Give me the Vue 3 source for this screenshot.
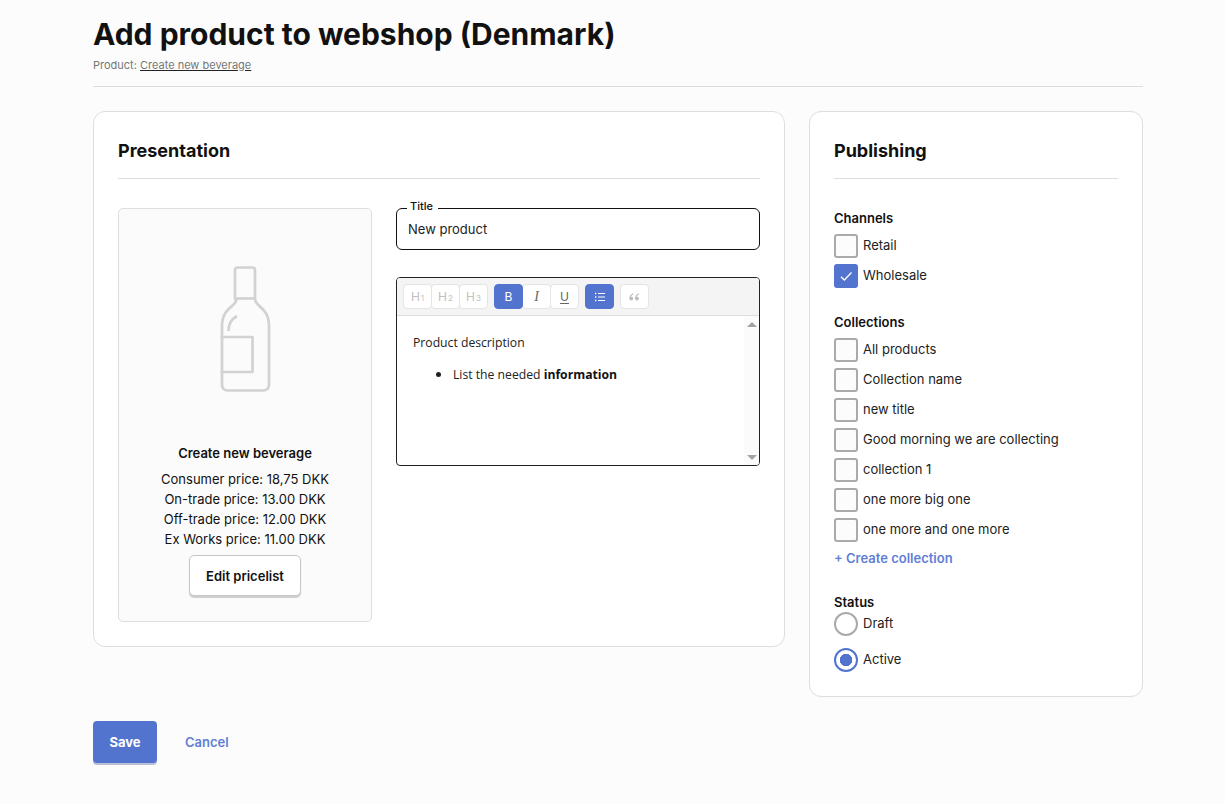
<script setup>
const prices = [
  'Consumer price: 18,75 DKK',
  'On-trade price: 13.00 DKK',
  'Off-trade price: 12.00 DKK',
  'Ex Works price: 11.00 DKK'
]
const channels = [
  { name: 'Retail', on: false },
  { name: 'Wholesale', on: true }
]
const collections = [
  'All products',
  'Collection name',
  'new title',
  'Good morning we are collecting',
  'collection 1',
  'one more big one',
  'one more and one more'
]
</script>

<template>
  <div class="page">
    <header class="head">
      <h1>Add product to webshop (Denmark)</h1>
      <p class="sub">Product: <a>Create new beverage</a></p>
    </header>

    <div class="cols">
      <section class="card main">
        <h2>Presentation</h2>
        <div class="main-body">
          <div class="product">
            <svg class="bottle" width="60" height="134" viewBox="215 262 60 134" fill="none" stroke="#d2d2d2" stroke-width="2.700" stroke-linejoin="round">
              <path d="M235 299V270a2.500 2.500 0 0 1 2.500-2.500h15a2.500 2.500 0 0 1 2.500 2.500v29c0 8 14 8 14 27v59a5.500 5.500 0 0 1-5.500 5.500h-36a5.500 5.500 0 0 1-5.500-5.500V326c0-19 14.500-19 14.500-27z" />
              <path d="M235 298.500h20" />
              <path d="M220.500 337h32v35h-32" />
              <path d="M228.500 331c0-7 3-12 8.500-15" />
            </svg>
            <div class="pname">Create new beverage</div>
            <div v-for="p in prices" :key="p" class="price">{{ p }}</div>
            <button class="edit">Edit pricelist</button>
          </div>

          <div class="fields">
            <fieldset class="title-field">
              <legend>Title</legend>
              <div class="title-value">New product</div>
            </fieldset>

            <div class="editor">
              <div class="toolbar">
                <div class="group">
                  <span class="tb dim">H<small>1</small></span>
                  <span class="tb dim">H<small>2</small></span>
                  <span class="tb dim">H<small>3</small></span>
                </div>
                <div class="group">
                  <span class="tb on">B</span>
                  <span class="tb ital">I</span>
                  <span class="tb und">U</span>
                </div>
                <div class="group">
                  <span class="tb on">
                    <svg width="10" height="10" viewBox="0 0 10 10" fill="none" stroke="#fff" stroke-width="1">
                      <path d="M3 1.500h7M3 5h7M3 8.500h7" />
                      <path d="M0 1.500h1.300M0 5h1.300M0 8.500h1.300" stroke-width="1.400" />
                    </svg>
                  </span>
                </div>
                <div class="group">
                  <span class="tb">
                    <svg width="11" height="8" viewBox="0 0 11 8" fill="#bdbdbd" stroke="#bdbdbd">
                      <circle cx="2.300" cy="5.600" r="1.900" stroke="none" />
                      <circle cx="8" cy="5.600" r="1.900" stroke="none" />
                      <path d="M1 5.500C1 3.200 2.300 1.500 4.200.7M6.700 5.500C6.700 3.200 8 1.500 9.900.7" fill="none" stroke-width="1.200" />
                    </svg>
                  </span>
                </div>
              </div>
              <div class="edit-area">
                <div class="content">
                  <p>Product description</p>
                  <ul>
                    <li>List the needed <strong>information</strong></li>
                  </ul>
                </div>
                <div class="scrollbar">
                  <i class="arrow up"></i>
                  <i class="arrow down"></i>
                </div>
              </div>
            </div>
          </div>
        </div>
      </section>

      <aside class="card side">
        <h2>Publishing</h2>

        <h3 class="first">Channels</h3>
        <label v-for="c in channels" :key="c.name" class="check">
          <span class="box" :class="{ checked: c.on }">
            <svg v-if="c.on" width="14" height="11" viewBox="0 0 14 11" fill="none" stroke="#fff" stroke-width="1.300">
              <path d="M2 5.800l3.300 3.200L12.500 1.500" />
            </svg>
          </span>
          <span class="lbl">{{ c.name }}</span>
        </label>

        <h3 class="second">Collections</h3>
        <label v-for="c in collections" :key="c" class="check">
          <span class="box"></span>
          <span class="lbl">{{ c }}</span>
        </label>
        <a class="create">+ Create collection</a>

        <h3 class="third">Status</h3>
        <label class="radio"><span class="dot"></span><span class="lbl">Draft</span></label>
        <label class="radio active"><span class="dot sel"></span><span class="lbl">Active</span></label>
      </aside>
    </div>

    <footer class="actions">
      <button class="save">Save</button>
      <a class="cancel">Cancel</a>
    </footer>
  </div>
</template>

<style>
html, body { background: #fcfcfc; margin: 0; }
</style>

<style scoped>
.page {
  width: 1050px;
  margin-left: 93px;
  height: 804px;
  overflow: hidden;
  font-family: Inter, "Liberation Sans", sans-serif;
  color: #111;
  font-size: 13px;
}
.head {
  height: 86px;
  border-bottom: 1px solid #dcdcdc;
  box-sizing: content-box;
}
h1 {
  margin: 0;
  padding-top: 15px;
  font-size: 30px;
  line-height: 38px;
  font-weight: 700;
  color: #111;
}
.sub {
  margin: 4px 0 0;
  font-size: 11px;
  line-height: 16px;
  color: #777;
}
.sub a { text-decoration: underline; text-decoration-color: #222; }
.cols {
  display: flex;
  align-items: flex-start;
  gap: 24px;
  margin-top: 24px;
}
.card {
  box-sizing: border-box;
  background: #fff;
  border: 1px solid #dedede;
  border-radius: 12px;
  padding: 24px;
}
.main { width: 692px; height: 536px; }
.side { width: 334px; height: 586px; }
h2 {
  margin: 0;
  height: 42px;
  border-bottom: 1px solid #dedede;
  font-size: 18px;
  line-height: 30px;
  font-weight: 700;
  color: #111;
}
.main-body {
  display: flex;
  gap: 24px;
  margin-top: 29px;
}
.product {
  box-sizing: border-box;
  width: 254px;
  height: 414px;
  background: #fbfbfb;
  border: 1px solid #dedede;
  border-radius: 5px;
  display: flex;
  flex-direction: column;
  align-items: center;
  text-align: center;
}
.bottle { display: block; margin-top: 53px; }
.pname { margin-top: 47px; font-weight: 600; font-size: 13px; line-height: 20px; margin-bottom: 6px; }
.price { line-height: 20px; font-size: 13px; }
.edit {
  margin-top: 6px;
  width: 112px;
  height: 41px;
  background: #fff;
  border: 1px solid #c6c6c6;
  border-radius: 5px;
  box-shadow: 0 2px 1px rgba(0, 0, 0, 0.18);
  font: 600 13px Inter, sans-serif;
  color: #111;
}
.fields { width: 364px; }
.title-field {
  box-sizing: border-box;
  margin: -9px 0 0;
  padding: 0 11px;
  height: 51px;
  border: 1px solid #111;
  border-radius: 6px;
  min-width: 0;
}
legend {
  padding: 0 5px 4px 3px;
  margin-left: -1px;
  font-size: 11px;
  font-weight: 500;
  line-height: 14px;
  color: #111;
}
.title-value { line-height: 20px; margin-top: 2px; font-size: 13px; color: #222; }
.editor {
  box-sizing: border-box;
  margin-top: 27px;
  height: 189px;
  border: 1px solid #222;
  border-radius: 4px;
  overflow: hidden;
  background: #fff;
}
.toolbar {
  box-sizing: border-box;
  display: flex;
  gap: 6px;
  height: 38px;
  padding: 6px;
  background: #f4f4f4;
  border-bottom: 1px solid #dcdcdc;
}
.group { display: flex; }
.tb {
  box-sizing: border-box;
  width: 29px;
  height: 25px;
  margin-right: -1px;
  display: flex;
  align-items: center;
  justify-content: center;
  background: #fff;
  border: 1px solid #e4e4e4;
  border-radius: 4px;
  font-size: 12px;
  color: #666;
}
.tb:last-child { margin-right: 0; }
.tb.dim { color: #c0c0c0; }
.tb small { font-size: 8px; margin-left: 1px; position: relative; top: 1px; }
.tb.on { background: #5274cf; border-color: #5274cf; color: #fff; position: relative; z-index: 1; }
.ital { font-family: "Liberation Serif", serif; font-style: italic; font-size: 14px; }
.und { text-decoration: underline; text-underline-offset: 2px; }
.edit-area { display: flex; height: 149px; }
.content {
  flex: 1;
  padding: 18px 16px;
  font-family: "Open Sans", "Noto Sans", sans-serif;
  font-size: 12.200px;
  line-height: 18px;
  color: #222;
}
.content p { margin: 0 0 12px; }
.content ul { margin: 0; padding-left: 40px; }
.content li::marker { font-size: 15px; }
.content strong { font-weight: 700; color: #111; }
.scrollbar {
  width: 15px;
  background: #fbfbfb;
  display: flex;
  flex-direction: column;
  justify-content: space-between;
  align-items: center;
  padding: 6px 0 5px;
  box-sizing: border-box;
}
.arrow {
  width: 0;
  height: 0;
  border-left: 5px solid transparent;
  border-right: 5px solid transparent;
}
.arrow.up { border-bottom: 5px solid #a3a3a3; }
.arrow.down { border-top: 5px solid #a3a3a3; }
h3 {
  margin: 0;
  font-size: 13px;
  font-weight: 600;
  line-height: 20px;
  color: #111;
}
.first { margin-top: 29px; margin-bottom: 6px; }
.second { margin-top: 24px; margin-bottom: 6px; }
.third { margin-top: 24px; }
.lbl { margin-bottom: 2px; }
.check {
  display: flex;
  align-items: center;
  gap: 5px;
  height: 24px;
  margin-bottom: 6px;
  font-size: 13px;
  color: #222;
}
.box {
  box-sizing: border-box;
  width: 24px;
  height: 24px;
  flex: none;
  border: 2px solid #aaa;
  border-radius: 3px;
  background: #fcfcfc;
  display: flex;
  align-items: center;
  justify-content: center;
}
.box.checked { background: #5274cf; border-color: #5274cf; }
.create {
  display: block;
  margin-top: 3px;
  font-size: 13px;
  font-weight: 600;
  line-height: 20px;
  color: #5f7fd6;
}
.radio {
  display: flex;
  align-items: center;
  gap: 5px;
  height: 24px;
  font-size: 13px;
  color: #222;
}
.active { margin-top: 12px; }
.dot {
  box-sizing: border-box;
  width: 24px;
  height: 24px;
  flex: none;
  border: 2px solid #aaa;
  border-radius: 50%;
  background: #fff;
}
.dot.sel {
  border-color: #5274cf;
  background: radial-gradient(circle, #5274cf 0 6px, #fff 6.500px);
}
.actions {
  display: flex;
  align-items: center;
  gap: 28px;
  margin-top: 24px;
}
.save {
  width: 64px;
  height: 42px;
  background: #5274cf;
  border: 0;
  border-radius: 4px;
  box-shadow: 0 2px 0 #b9bfd6;
  color: #fff;
  font: 700 13px Inter, sans-serif;
}
.cancel {
  font-size: 13px;
  font-weight: 600;
  color: #5f7fd6;
}
</style>
